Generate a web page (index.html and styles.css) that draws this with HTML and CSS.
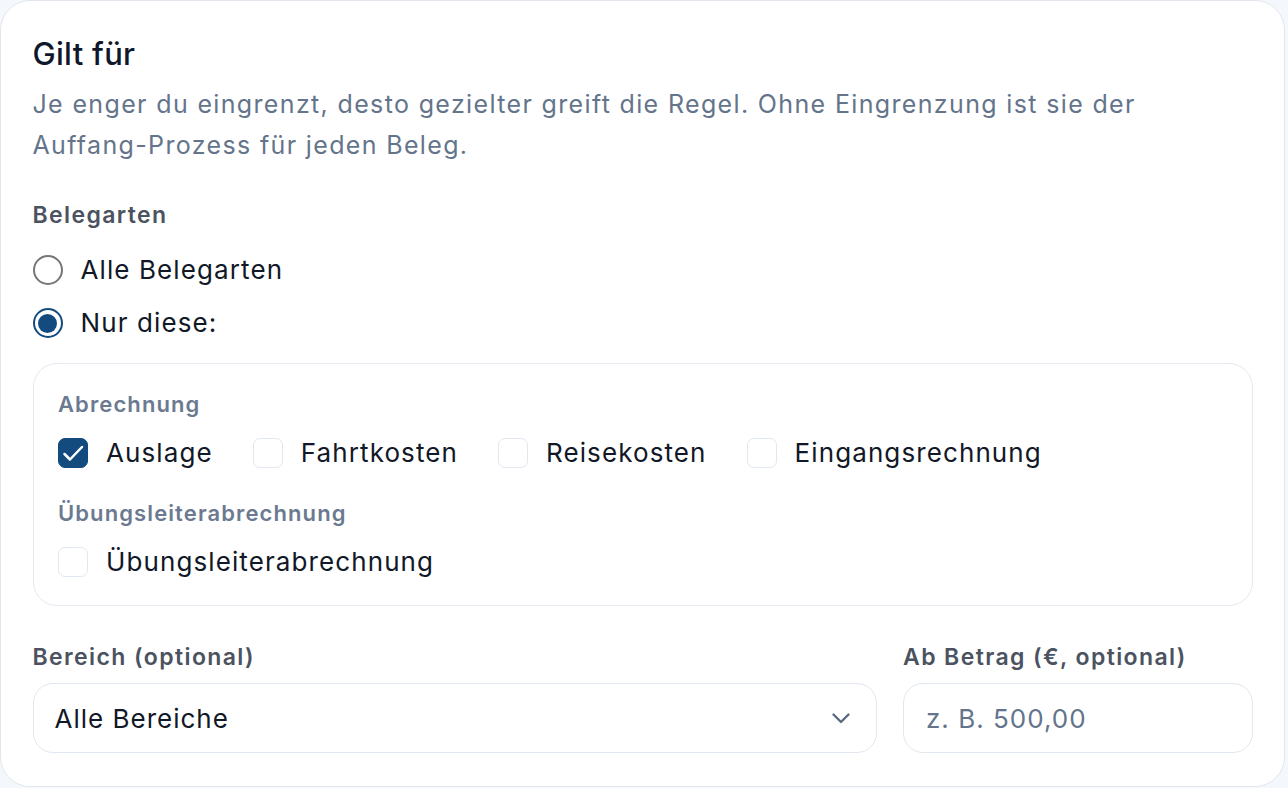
FILE: index.html
```html
<!DOCTYPE html>
<html lang="de">
<head>
    <meta charset="UTF-8">
    <meta name="viewport" content="width=device-width, initial-scale=1.0">
    <title>Regel – Gilt für</title>
    <link rel="stylesheet" href="styles.css">
</head>
<body>
    <section class="card">
        <h2 class="card-title">Gilt für</h2>
        <p class="card-desc">Je enger du eingrenzt, desto gezielter greift die Regel. Ohne Eingrenzung ist sie der Auffang-Prozess für jeden Beleg.</p>

        <div class="field-label">Belegarten</div>
        <div class="radio-list">
            <label class="radio">
                <input type="radio" name="belegarten" value="alle">
                <span class="radio-mark"></span>
                Alle Belegarten
            </label>
            <label class="radio">
                <input type="radio" name="belegarten" value="auswahl" checked>
                <span class="radio-mark"></span>
                Nur diese:
            </label>
        </div>

        <div class="type-box">
            <div class="group-label">Abrechnung</div>
            <div class="check-row">
                <label class="check">
                    <input type="checkbox" checked>
                    <span class="check-mark">
                        <svg viewBox="0 0 30 30" width="30" height="30"><path d="M6.5 16l5.5 5.5 12-12.5" fill="none" stroke="#fff" stroke-width="2.5" stroke-linecap="round" stroke-linejoin="round"/></svg>
                    </span>
                    Auslage
                </label>
                <label class="check">
                    <input type="checkbox">
                    <span class="check-mark"></span>
                    Fahrtkosten
                </label>
                <label class="check">
                    <input type="checkbox">
                    <span class="check-mark"></span>
                    Reisekosten
                </label>
                <label class="check">
                    <input type="checkbox">
                    <span class="check-mark"></span>
                    Eingangsrechnung
                </label>
            </div>

            <div class="group-label">Übungsleiterabrechnung</div>
            <div class="check-row">
                <label class="check">
                    <input type="checkbox">
                    <span class="check-mark"></span>
                    Übungsleiterabrechnung
                </label>
            </div>
        </div>

        <div class="filter-grid">
            <div class="filter">
                <div class="field-label">Bereich (optional)</div>
                <div class="select">
                    <span>Alle Bereiche</span>
                    <svg viewBox="0 0 22 22" width="22" height="22"><path d="M3.5 7.5l7.5 7.5 7.5-7.5" fill="none" stroke="#5b6b80" stroke-width="2.4" stroke-linecap="round" stroke-linejoin="round"/></svg>
                </div>
            </div>
            <div class="filter">
                <div class="field-label">Ab Betrag (€, optional)</div>
                <input class="text-input" type="text" placeholder="z. B. 500,00">
            </div>
        </div>
    </section>
</body>
</html>
```

FILE: styles.css
```css
body {
    margin: 0;
    background-color: #f4f7fb;
    font-family: Inter, "Noto Sans", sans-serif;
    color: #111827;
}
.card {
    width: 1285px;
    box-sizing: border-box;
    background-color: #ffffff;
    border: 1.5px solid #e2e6ec;
    border-radius: 30px;
    padding: 33px 31px 33px 31.5px;
}
.card-title {
    margin: 0;
    font-size: 31px;
    font-weight: 500;
    line-height: 40px;
    letter-spacing: 0.3px;
    color: #0f172a;
}
.card-desc {
    margin: 10px 0 0;
    font-size: 25px;
    line-height: 41px;
    letter-spacing: 1.35px;
    color: #64748b;
}
.field-label {
    font-size: 23px;
    font-weight: 600;
    line-height: 30px;
    letter-spacing: 1.4px;
    color: #4b5260;
}
.card-desc + .field-label {
    margin-top: 34px;
}
.radio-list {
    display: flex;
    flex-direction: column;
    gap: 23px;
    margin-top: 25px;
}
.radio,
.check {
    display: flex;
    align-items: center;
    font-size: 26px;
    line-height: 30px;
    letter-spacing: 1.1px;
    color: #111827;
}
.radio input,
.check input {
    display: none;
}
.radio-mark {
    width: 30px;
    height: 30px;
    box-sizing: border-box;
    border: 2px solid #767676;
    border-radius: 50%;
    margin-right: 18px;
    position: relative;
}
.radio input:checked + .radio-mark {
    border: 2.5px solid #134b7f;
}
.radio input:checked + .radio-mark::after {
    content: "";
    position: absolute;
    inset: 3.5px;
    border-radius: 50%;
    background-color: #134b7f;
}
.type-box {
    margin-top: 25px;
    border: 1.5px solid #e5e9f0;
    border-radius: 24px;
    padding: 26px 24.5px 28px;
}
.group-label {
    font-size: 22px;
    font-weight: 600;
    line-height: 28px;
    letter-spacing: 1.1px;
    color: #6b7a90;
}
.check-row {
    display: flex;
    gap: 40px;
    margin-top: 20px;
}
.check-row + .group-label {
    margin-top: 31px;
}
.check-mark {
    width: 30px;
    height: 30px;
    box-sizing: border-box;
    border: 1.5px solid #e2e8f0;
    border-radius: 7px;
    margin-right: 18px;
    display: flex;
    align-items: center;
    justify-content: center;
}
.check-mark svg {
    flex: none;
}
.check input:checked + .check-mark {
    background-color: #134b7f;
    border-color: #134b7f;
}
.filter-grid {
    display: grid;
    grid-template-columns: 1fr 350px;
    gap: 26px;
    margin-top: 36px;
}
.filter .field-label {
    margin-bottom: 11px;
}
.select,
.text-input {
    height: 70px;
    box-sizing: border-box;
    border: 1.5px solid #e2e8f0;
    border-radius: 20px;
    background-color: #ffffff;
    font-family: inherit;
    font-size: 26px;
    letter-spacing: 1px;
    color: #111827;
}
.select {
    display: flex;
    align-items: center;
    justify-content: space-between;
    padding: 0 24px 0 21px;
}
.text-input {
    width: 100%;
    padding: 0 22px;
    outline: none;
}
.text-input::placeholder {
    color: #64748b;
}
```
